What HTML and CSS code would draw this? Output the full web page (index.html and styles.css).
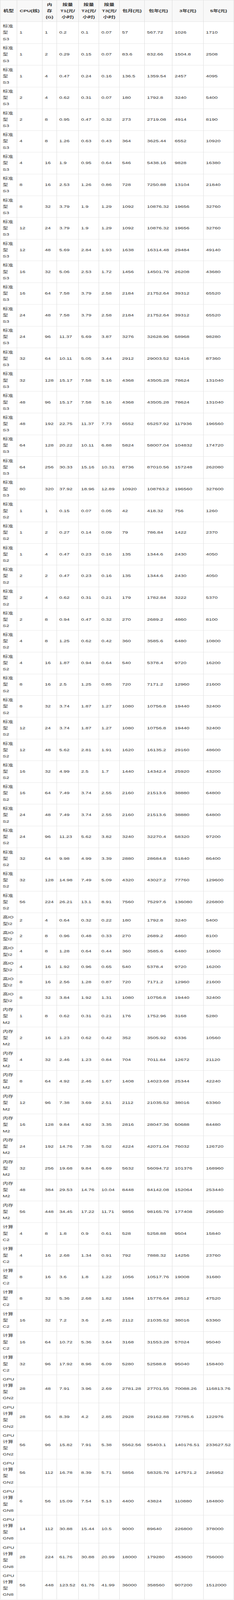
FILE: index.html
```html
<!DOCTYPE html>
<html lang="zh-CN">
<head>
<meta charset="utf-8">
<title>云服务器价格表</title>
<link rel="stylesheet" href="styles.css">
</head>
<body>
<div class="frame">
<table class="price">
<colgroup>
<col class="c1"><col class="c2"><col class="c3"><col class="c4"><col class="c5"><col class="c6"><col class="c7"><col class="c8"><col class="c9"><col class="c10">
</colgroup>
<thead>
<tr><th>机型</th><th>CPU(核)</th><th>内<br>存<br>(G)</th><th>按量<br>T1(元/<br>小时)</th><th>按量<br>T2(元/<br>小时)</th><th>按量<br>T3(元/<br>小时)</th><th>包月(元)</th><th>包年(元)</th><th>3年(元)</th><th>5年(元)</th></tr>
</thead>
<tbody>
<tr><td>标准<br>型<br>S3</td><td>1</td><td>1</td><td>0.2</td><td>0.1</td><td>0.07</td><td>57</td><td>567.72</td><td>1026</td><td>1710</td></tr>
<tr><td>标准<br>型<br>S3</td><td>1</td><td>2</td><td>0.29</td><td>0.15</td><td>0.07</td><td>83.6</td><td>832.66</td><td>1504.8</td><td>2508</td></tr>
<tr><td>标准<br>型<br>S3</td><td>1</td><td>4</td><td>0.47</td><td>0.24</td><td>0.16</td><td>136.5</td><td>1359.54</td><td>2457</td><td>4095</td></tr>
<tr><td>标准<br>型<br>S3</td><td>2</td><td>4</td><td>0.62</td><td>0.31</td><td>0.07</td><td>180</td><td>1792.8</td><td>3240</td><td>5400</td></tr>
<tr><td>标准<br>型<br>S3</td><td>2</td><td>8</td><td>0.95</td><td>0.47</td><td>0.32</td><td>273</td><td>2719.08</td><td>4914</td><td>8190</td></tr>
<tr><td>标准<br>型<br>S3</td><td>4</td><td>8</td><td>1.26</td><td>0.63</td><td>0.43</td><td>364</td><td>3625.44</td><td>6552</td><td>10920</td></tr>
<tr><td>标准<br>型<br>S3</td><td>4</td><td>16</td><td>1.9</td><td>0.95</td><td>0.64</td><td>546</td><td>5438.16</td><td>9828</td><td>16380</td></tr>
<tr><td>标准<br>型<br>S3</td><td>8</td><td>16</td><td>2.53</td><td>1.26</td><td>0.86</td><td>728</td><td>7250.88</td><td>13104</td><td>21840</td></tr>
<tr><td>标准<br>型<br>S3</td><td>8</td><td>32</td><td>3.79</td><td>1.9</td><td>1.29</td><td>1092</td><td>10876.32</td><td>19656</td><td>32760</td></tr>
<tr><td>标准<br>型<br>S3</td><td>12</td><td>24</td><td>3.79</td><td>1.9</td><td>1.29</td><td>1092</td><td>10876.32</td><td>19656</td><td>32760</td></tr>
<tr><td>标准<br>型<br>S3</td><td>12</td><td>48</td><td>5.69</td><td>2.84</td><td>1.93</td><td>1638</td><td>16314.48</td><td>29484</td><td>49140</td></tr>
<tr><td>标准<br>型<br>S3</td><td>16</td><td>32</td><td>5.06</td><td>2.53</td><td>1.72</td><td>1456</td><td>14501.76</td><td>26208</td><td>43680</td></tr>
<tr><td>标准<br>型<br>S3</td><td>16</td><td>64</td><td>7.58</td><td>3.79</td><td>2.58</td><td>2184</td><td>21752.64</td><td>39312</td><td>65520</td></tr>
<tr><td>标准<br>型<br>S3</td><td>24</td><td>48</td><td>7.58</td><td>3.79</td><td>2.58</td><td>2184</td><td>21752.64</td><td>39312</td><td>65520</td></tr>
<tr><td>标准<br>型<br>S3</td><td>24</td><td>96</td><td>11.37</td><td>5.69</td><td>3.87</td><td>3276</td><td>32628.96</td><td>58968</td><td>98280</td></tr>
<tr><td>标准<br>型<br>S3</td><td>32</td><td>64</td><td>10.11</td><td>5.05</td><td>3.44</td><td>2912</td><td>29003.52</td><td>52416</td><td>87360</td></tr>
<tr><td>标准<br>型<br>S3</td><td>32</td><td>128</td><td>15.17</td><td>7.58</td><td>5.16</td><td>4368</td><td>43505.28</td><td>78624</td><td>131040</td></tr>
<tr><td>标准<br>型<br>S3</td><td>48</td><td>96</td><td>15.17</td><td>7.58</td><td>5.16</td><td>4368</td><td>43505.28</td><td>78624</td><td>131040</td></tr>
<tr><td>标准<br>型<br>S3</td><td>48</td><td>192</td><td>22.75</td><td>11.37</td><td>7.73</td><td>6552</td><td>65257.92</td><td>117936</td><td>196560</td></tr>
<tr><td>标准<br>型<br>S3</td><td>64</td><td>128</td><td>20.22</td><td>10.11</td><td>6.88</td><td>5824</td><td>58007.04</td><td>104832</td><td>174720</td></tr>
<tr><td>标准<br>型<br>S3</td><td>64</td><td>256</td><td>30.33</td><td>15.16</td><td>10.31</td><td>8736</td><td>87010.56</td><td>157248</td><td>262080</td></tr>
<tr><td>标准<br>型<br>S3</td><td>80</td><td>320</td><td>37.92</td><td>18.96</td><td>12.89</td><td>10920</td><td>108763.2</td><td>196560</td><td>327600</td></tr>
<tr><td>标准<br>型<br>S2</td><td>1</td><td>1</td><td>0.15</td><td>0.07</td><td>0.05</td><td>42</td><td>418.32</td><td>756</td><td>1260</td></tr>
<tr><td>标准<br>型<br>S2</td><td>1</td><td>2</td><td>0.27</td><td>0.14</td><td>0.09</td><td>79</td><td>786.84</td><td>1422</td><td>2370</td></tr>
<tr><td>标准<br>型<br>S2</td><td>1</td><td>4</td><td>0.47</td><td>0.23</td><td>0.16</td><td>135</td><td>1344.6</td><td>2430</td><td>4050</td></tr>
<tr><td>标准<br>型<br>S2</td><td>2</td><td>2</td><td>0.47</td><td>0.23</td><td>0.16</td><td>135</td><td>1344.6</td><td>2430</td><td>4050</td></tr>
<tr><td>标准<br>型<br>S2</td><td>2</td><td>4</td><td>0.62</td><td>0.31</td><td>0.21</td><td>179</td><td>1782.84</td><td>3222</td><td>5370</td></tr>
<tr><td>标准<br>型<br>S2</td><td>2</td><td>8</td><td>0.94</td><td>0.47</td><td>0.32</td><td>270</td><td>2689.2</td><td>4860</td><td>8100</td></tr>
<tr><td>标准<br>型<br>S2</td><td>4</td><td>8</td><td>1.25</td><td>0.62</td><td>0.42</td><td>360</td><td>3585.6</td><td>6480</td><td>10800</td></tr>
<tr><td>标准<br>型<br>S2</td><td>4</td><td>16</td><td>1.87</td><td>0.94</td><td>0.64</td><td>540</td><td>5378.4</td><td>9720</td><td>16200</td></tr>
<tr><td>标准<br>型<br>S2</td><td>8</td><td>16</td><td>2.5</td><td>1.25</td><td>0.85</td><td>720</td><td>7171.2</td><td>12960</td><td>21600</td></tr>
<tr><td>标准<br>型<br>S2</td><td>8</td><td>32</td><td>3.74</td><td>1.87</td><td>1.27</td><td>1080</td><td>10756.8</td><td>19440</td><td>32400</td></tr>
<tr><td>标准<br>型<br>S2</td><td>12</td><td>24</td><td>3.74</td><td>1.87</td><td>1.27</td><td>1080</td><td>10756.8</td><td>19440</td><td>32400</td></tr>
<tr><td>标准<br>型<br>S2</td><td>12</td><td>48</td><td>5.62</td><td>2.81</td><td>1.91</td><td>1620</td><td>16135.2</td><td>29160</td><td>48600</td></tr>
<tr><td>标准<br>型<br>S2</td><td>16</td><td>32</td><td>4.99</td><td>2.5</td><td>1.7</td><td>1440</td><td>14342.4</td><td>25920</td><td>43200</td></tr>
<tr><td>标准<br>型<br>S2</td><td>16</td><td>64</td><td>7.49</td><td>3.74</td><td>2.55</td><td>2160</td><td>21513.6</td><td>38880</td><td>64800</td></tr>
<tr><td>标准<br>型<br>S2</td><td>24</td><td>48</td><td>7.49</td><td>3.74</td><td>2.55</td><td>2160</td><td>21513.6</td><td>38880</td><td>64800</td></tr>
<tr><td>标准<br>型<br>S2</td><td>24</td><td>96</td><td>11.23</td><td>5.62</td><td>3.82</td><td>3240</td><td>32270.4</td><td>58320</td><td>97200</td></tr>
<tr><td>标准<br>型<br>S2</td><td>32</td><td>64</td><td>9.98</td><td>4.99</td><td>3.39</td><td>2880</td><td>28684.8</td><td>51840</td><td>86400</td></tr>
<tr><td>标准<br>型<br>S2</td><td>32</td><td>128</td><td>14.98</td><td>7.49</td><td>5.09</td><td>4320</td><td>43027.2</td><td>77760</td><td>129600</td></tr>
<tr><td>标准<br>型<br>S2</td><td>56</td><td>224</td><td>26.21</td><td>13.1</td><td>8.91</td><td>7560</td><td>75297.6</td><td>136080</td><td>226800</td></tr>
<tr><td>高IO<br>型I2</td><td>2</td><td>4</td><td>0.64</td><td>0.32</td><td>0.22</td><td>180</td><td>1792.8</td><td>3240</td><td>5400</td></tr>
<tr><td>高IO<br>型I2</td><td>2</td><td>8</td><td>0.96</td><td>0.48</td><td>0.33</td><td>270</td><td>2689.2</td><td>4860</td><td>8100</td></tr>
<tr><td>高IO<br>型I2</td><td>4</td><td>8</td><td>1.28</td><td>0.64</td><td>0.44</td><td>360</td><td>3585.6</td><td>6480</td><td>10800</td></tr>
<tr><td>高IO<br>型I2</td><td>4</td><td>16</td><td>1.92</td><td>0.96</td><td>0.65</td><td>540</td><td>5378.4</td><td>9720</td><td>16200</td></tr>
<tr><td>高IO<br>型I2</td><td>8</td><td>16</td><td>2.56</td><td>1.28</td><td>0.87</td><td>720</td><td>7171.2</td><td>12960</td><td>21600</td></tr>
<tr><td>高IO<br>型I2</td><td>8</td><td>32</td><td>3.84</td><td>1.92</td><td>1.31</td><td>1080</td><td>10756.8</td><td>19440</td><td>32400</td></tr>
<tr><td>内存<br>型<br>M2</td><td>1</td><td>8</td><td>0.62</td><td>0.31</td><td>0.21</td><td>176</td><td>1752.96</td><td>3168</td><td>5280</td></tr>
<tr><td>内存<br>型<br>M2</td><td>2</td><td>16</td><td>1.23</td><td>0.62</td><td>0.42</td><td>352</td><td>3505.92</td><td>6336</td><td>10560</td></tr>
<tr><td>内存<br>型<br>M2</td><td>4</td><td>32</td><td>2.46</td><td>1.23</td><td>0.84</td><td>704</td><td>7011.84</td><td>12672</td><td>21120</td></tr>
<tr><td>内存<br>型<br>M2</td><td>8</td><td>64</td><td>4.92</td><td>2.46</td><td>1.67</td><td>1408</td><td>14023.68</td><td>25344</td><td>42240</td></tr>
<tr><td>内存<br>型<br>M2</td><td>12</td><td>96</td><td>7.38</td><td>3.69</td><td>2.51</td><td>2112</td><td>21035.52</td><td>38016</td><td>63360</td></tr>
<tr><td>内存<br>型<br>M2</td><td>16</td><td>128</td><td>9.84</td><td>4.92</td><td>3.35</td><td>2816</td><td>28047.36</td><td>50688</td><td>84480</td></tr>
<tr><td>内存<br>型<br>M2</td><td>24</td><td>192</td><td>14.76</td><td>7.38</td><td>5.02</td><td>4224</td><td>42071.04</td><td>76032</td><td>126720</td></tr>
<tr><td>内存<br>型<br>M2</td><td>32</td><td>256</td><td>19.68</td><td>9.84</td><td>6.69</td><td>5632</td><td>56094.72</td><td>101376</td><td>168960</td></tr>
<tr><td>内存<br>型<br>M2</td><td>48</td><td>384</td><td>29.53</td><td>14.76</td><td>10.04</td><td>8448</td><td>84142.08</td><td>152064</td><td>253440</td></tr>
<tr><td>内存<br>型<br>M2</td><td>56</td><td>448</td><td>34.45</td><td>17.22</td><td>11.71</td><td>9856</td><td>98165.76</td><td>177408</td><td>295680</td></tr>
<tr><td>计算<br>型<br>C2</td><td>4</td><td>8</td><td>1.8</td><td>0.9</td><td>0.61</td><td>528</td><td>5258.88</td><td>9504</td><td>15840</td></tr>
<tr><td>计算<br>型<br>C2</td><td>4</td><td>16</td><td>2.68</td><td>1.34</td><td>0.91</td><td>792</td><td>7888.32</td><td>14256</td><td>23760</td></tr>
<tr><td>计算<br>型<br>C2</td><td>8</td><td>16</td><td>3.6</td><td>1.8</td><td>1.22</td><td>1056</td><td>10517.76</td><td>19008</td><td>31680</td></tr>
<tr><td>计算<br>型<br>C2</td><td>8</td><td>32</td><td>5.36</td><td>2.68</td><td>1.82</td><td>1584</td><td>15776.64</td><td>28512</td><td>47520</td></tr>
<tr><td>计算<br>型<br>C2</td><td>16</td><td>32</td><td>7.2</td><td>3.6</td><td>2.45</td><td>2112</td><td>21035.52</td><td>38016</td><td>63360</td></tr>
<tr><td>计算<br>型<br>C2</td><td>16</td><td>64</td><td>10.72</td><td>5.36</td><td>3.64</td><td>3168</td><td>31553.28</td><td>57024</td><td>95040</td></tr>
<tr><td>计算<br>型<br>C2</td><td>32</td><td>96</td><td>17.92</td><td>8.96</td><td>6.09</td><td>5280</td><td>52588.8</td><td>95040</td><td>158400</td></tr>
<tr><td>GPU<br>计算<br>型<br>GN2</td><td>28</td><td>48</td><td>7.91</td><td>3.96</td><td>2.69</td><td>2781.28</td><td>27701.55</td><td>70088.26</td><td>116813.76</td></tr>
<tr><td>GPU<br>计算<br>型<br>GN2</td><td>28</td><td>56</td><td>8.39</td><td>4.2</td><td>2.85</td><td>2928</td><td>29162.88</td><td>73785.6</td><td>122976</td></tr>
<tr><td>GPU<br>计算<br>型<br>GN2</td><td>56</td><td>96</td><td>15.82</td><td>7.91</td><td>5.38</td><td>5562.56</td><td>55403.1</td><td>140176.51</td><td>233627.52</td></tr>
<tr><td>GPU<br>计算<br>型<br>GN2</td><td>56</td><td>112</td><td>16.78</td><td>8.39</td><td>5.71</td><td>5856</td><td>58325.76</td><td>147571.2</td><td>245952</td></tr>
<tr><td>GPU<br>计算<br>型<br>GN8</td><td>6</td><td>56</td><td>15.09</td><td>7.54</td><td>5.13</td><td>4400</td><td>43824</td><td>110880</td><td>184800</td></tr>
<tr><td>GPU<br>计算<br>型<br>GN8</td><td>14</td><td>112</td><td>30.88</td><td>15.44</td><td>10.5</td><td>9000</td><td>89640</td><td>226800</td><td>378000</td></tr>
<tr><td>GPU<br>计算<br>型<br>GN8</td><td>28</td><td>224</td><td>61.76</td><td>30.88</td><td>20.99</td><td>18000</td><td>179280</td><td>453600</td><td>756000</td></tr>
<tr><td>GPU<br>计算<br>型<br>GN8</td><td>56</td><td>448</td><td>123.52</td><td>61.76</td><td>41.99</td><td>36000</td><td>358560</td><td>907200</td><td>1512000</td></tr>
</tbody>
</table>
</div>
</body>
</html>
```

FILE: styles.css
```css
html, body {
  margin: 0;
  padding: 0;
  background: #ffffff;
}

body {
  font-family: "Liberation Sans", "Noto Sans CJK SC", sans-serif;
  font-size: 13.5px;
  color: #333333;
}

.price {
  width: 599px;
  table-layout: fixed;
  border-collapse: collapse;
}

.price .c1 { width: 43px; }
.price .c2 { width: 65px; }
.price .c3 { width: 37px; }
.price .c4 { width: 56px; }
.price .c5 { width: 52px; }
.price .c6 { width: 53px; }
.price .c7 { width: 64px; }
.price .c8 { width: 71px; }
.price .c9 { width: 80px; }
.price .c10 { width: 78px; }

.price th,
.price td {
  border: 1px solid #dddddd;
  padding: 4.72px 6px;
  line-height: 24px;
  vertical-align: middle;
  white-space: nowrap;
}

.price th {
  background: #f8f8f8;
  font-weight: bold;
  text-align: center;
}

.price td {
  text-align: left;
  background: #ffffff;
}

@media (max-height: 5000px) {
  html, body {
    height: 100%;
    overflow: hidden;
  }

  .frame {
    height: 100vh;
    overflow: clip;
  }

  .price {
    transform: scaleY(0.6749);
    transform-origin: 0 0;
  }
}
```
